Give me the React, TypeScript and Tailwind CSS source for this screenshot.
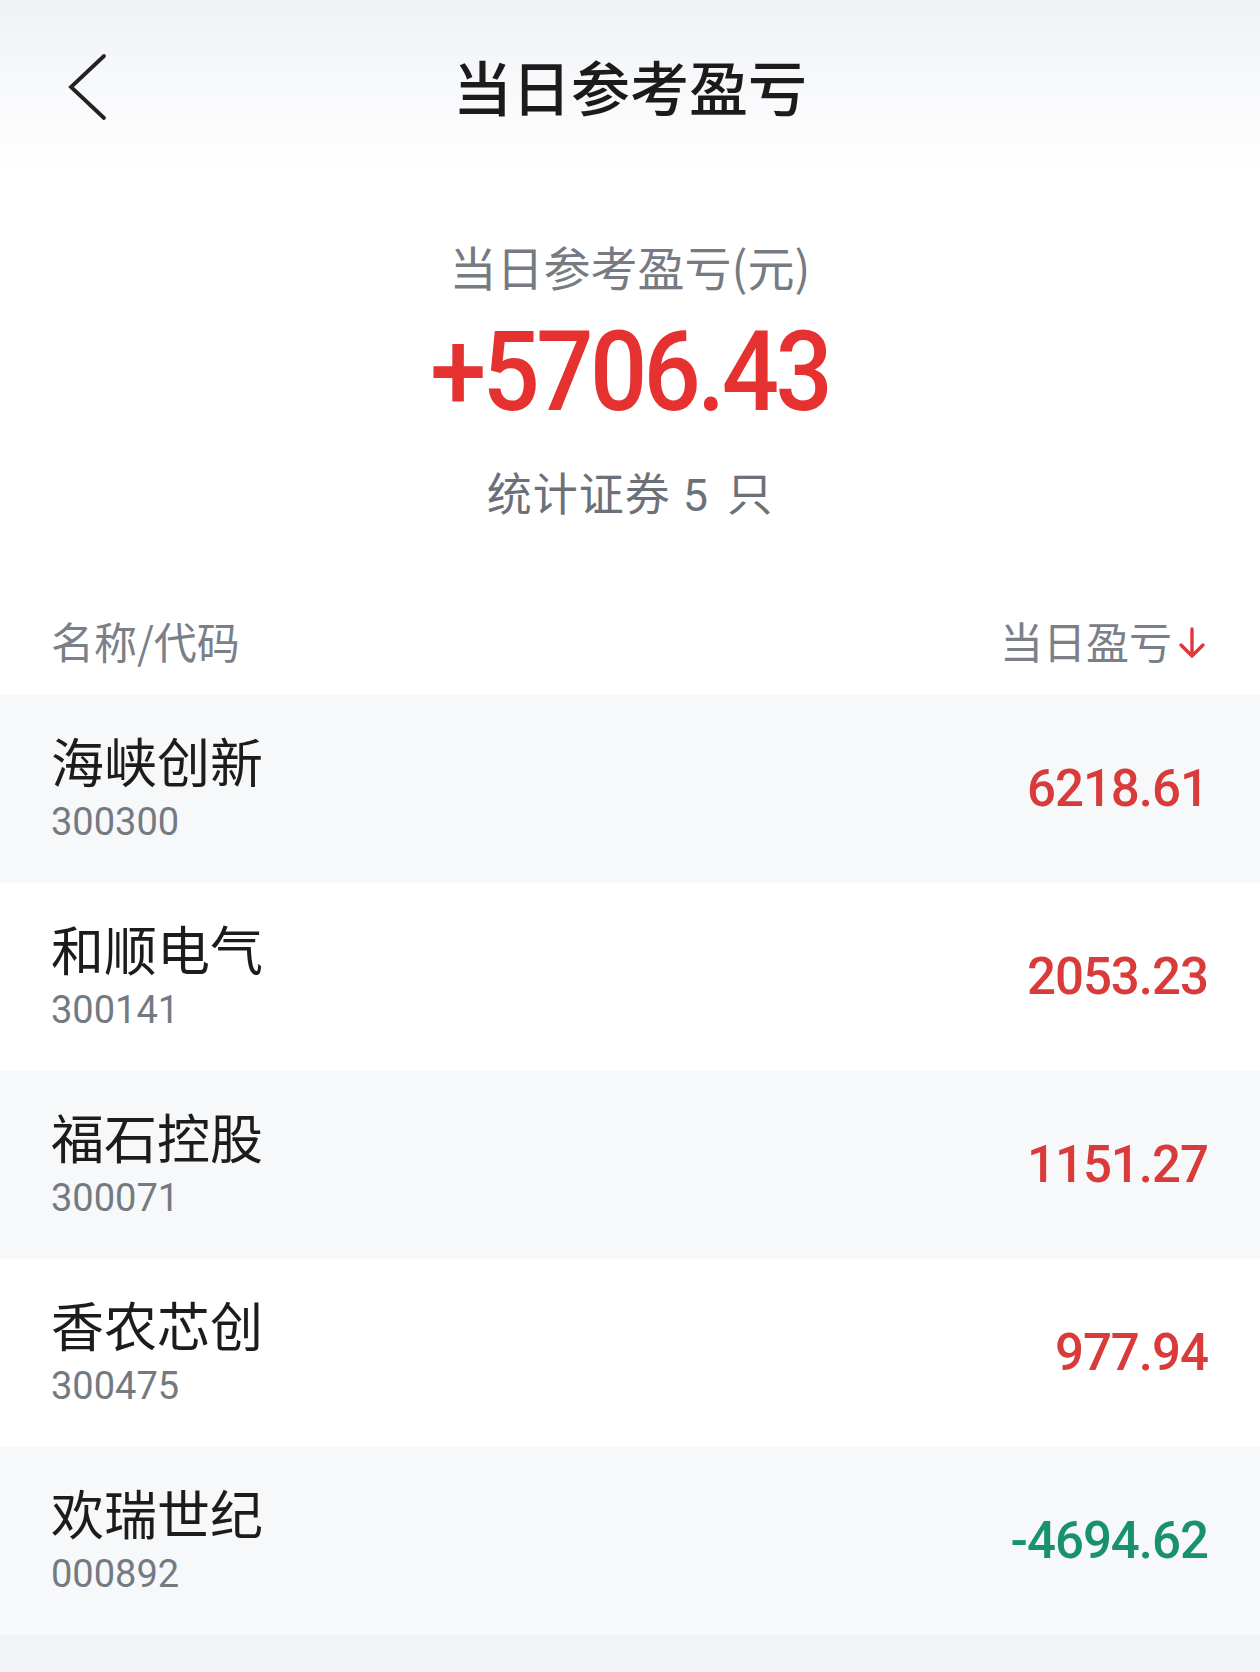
const rows = [
  { name: "海峡创新", code: "300300", value: "6218.61", up: true },
  { name: "和顺电气", code: "300141", value: "2053.23", up: true },
  { name: "福石控股", code: "300071", value: "1151.27", up: true },
  { name: "香农芯创", code: "300475", value: "977.94", up: true },
  { name: "欢瑞世纪", code: "000892", value: "-4694.62", up: false },
];

const cjk = "font-['Noto_Sans_CJK_SC',sans-serif]";
const num = "font-['Roboto','Noto_Sans_CJK_SC',sans-serif]";

export default function App() {
  return (
    <div className={`w-[1260px] min-h-[1672px] bg-white flex flex-col ${cjk}`}>
      {/* top bar */}
      <div className="h-[174px] grid grid-cols-[1fr_auto_1fr] items-center bg-gradient-to-b from-[#eff1f6] via-[#f8f9fb] to-white">
        <div className="pl-[68px] flex items-center">
          <svg width="40" height="68" viewBox="0 0 40 68" fill="none">
            <polyline
              points="36,3 3,34 36,65"
              stroke="#222"
              strokeWidth="3.8"
              strokeLinecap="round"
              strokeLinejoin="miter"
            />
          </svg>
        </div>
        <div className="text-[59px] leading-none font-medium text-[#1b1b1b] -mt-[4px]">当日参考盈亏</div>
        <div />
      </div>

      {/* summary */}
      <div className="flex flex-col items-center mt-[62px]">
        <div className="text-[47px] leading-[60px] text-[#767b83]">当日参考盈亏(元)</div>
        <div className={`mt-[16px] h-[120px] flex items-center text-[112px] leading-none font-medium tracking-[-4px] text-[#e5312f] ${num}`}>
          <span className="inline-block scale-x-[0.9]">+5706.43</span>
        </div>
        <div className={`mt-[34px] text-[45px] leading-[60px] tracking-[1px] text-[#6c7179] ${num}`}>
          统计证券 5<span className="ml-[6px]"> 只</span>
        </div>
      </div>

      {/* table header */}
      <div className="mt-[59px] h-[110px] flex items-center justify-between pl-[51px] pr-[54px]">
        <div className="text-[43px] text-[#7b8088]">名称/代码</div>
        <div className="flex items-center gap-[6px]">
          <span className="text-[43px] text-[#7b8088]">当日盈亏</span>
          <svg width="28" height="32" viewBox="0 0 28 32" fill="none" className="mt-[6px]">
            <path d="M14 2 V29 M3 18 L14 29 L25 18" stroke="#e1373b" strokeWidth="3.4" strokeLinecap="round" strokeLinejoin="round" />
          </svg>
        </div>
      </div>

      {/* rows */}
      <div className="flex flex-col">
        {rows.map((r, i) => (
          <div
            key={r.code}
            className={`h-[188px] flex items-center justify-between pl-[51px] pr-[52px] ${i % 2 === 0 ? "bg-[#f7f8f9]" : "bg-white"}`}
          >
            <div className="flex flex-col pt-[4px]">
              <div className="text-[53px] leading-[62px] text-[#1c1c1c]">{r.name}</div>
              <div className={`text-[38px] leading-[62px] text-[#747a82] ${num}`}>{r.code}</div>
            </div>
            <div
              className={`text-[51px] font-medium tracking-[-1px] ${num} ${r.up ? "text-[#d93a3a]" : "text-[#17926a]"}`}
            >
              {r.value}
            </div>
          </div>
        ))}
      </div>

      <div className="flex-1 bg-[#f2f3f6]" />
    </div>
  );
}
